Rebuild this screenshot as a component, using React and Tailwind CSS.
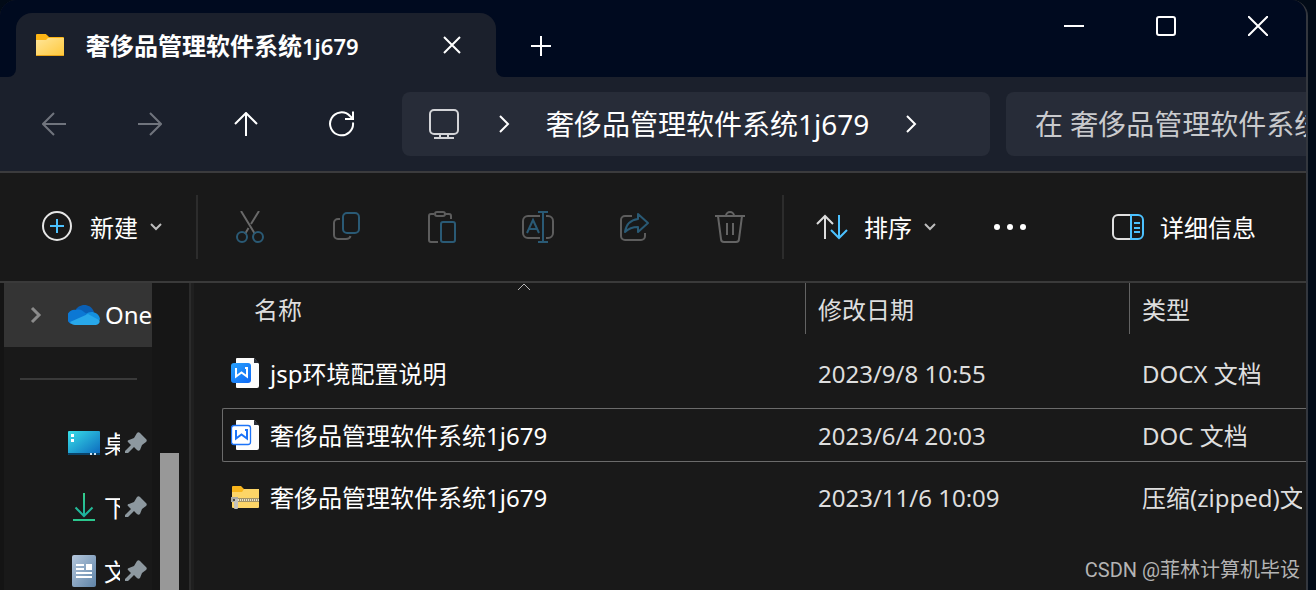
const files = [
  { name: 'jsp环境配置说明', date: '2023/9/8 10:55', type: 'DOCX 文档', icon: DocxIcon },
  { name: '奢侈品管理软件系统1j679', date: '2023/6/4 20:03', type: 'DOC 文档', icon: DocIcon, focused: true },
  { name: '奢侈品管理软件系统1j679', date: '2023/11/6 10:09', type: '压缩(zipped)文件夹', icon: ZipIcon },
];

const pinned = [
  { name: '桌面', icon: DesktopIcon },
  { name: '下载', icon: DownloadIcon },
  { name: '文档', icon: DocumentsIcon },
];

const actions = [
  { label: '剪切', icon: CutIcon },
  { label: '复制', icon: CopyIcon },
  { label: '粘贴', icon: PasteIcon },
  { label: '重命名', icon: RenameIcon },
  { label: '共享', icon: ShareIcon },
  { label: '删除', icon: DeleteIcon },
];

function Svg({ w = 32, h = 32, className = '', children }) {
  return (
    <svg width={w} height={h} viewBox={`0 0 ${w} ${h}`} fill="none" strokeWidth="2" className={`shrink-0 ${className}`} aria-hidden="true">
      {children}
    </svg>
  );
}

function FolderIcon() {
  return (
    <Svg w={28} h={24}>
      <defs>
        <linearGradient id="folder" x1="0" y1="0" x2="1" y2="1">
          <stop stopColor="#ffe69a" />
          <stop offset="1" stopColor="#ffc83a" />
        </linearGradient>
      </defs>
      <path d="M0 2a1 1 0 0 1 1-1h8c1 0 1.500.5 2 1l2 2h14a1 1 0 0 1 1 1v8H0z" fill="#fdb515" />
      <path d="M0 7h10l2-2h16v17a1 1 0 0 1-1 1H1a1 1 0 0 1-1-1z" fill="url(#folder)" />
      <path d="M0 22h28a1 1 0 0 1-1 1H1a1 1 0 0 1-1-1z" fill="#e9a418" />
    </Svg>
  );
}

function CutIcon() {
  return (
    <Svg>
      <path d="M7 0l14 23M25 0l-8 13M14.500 17l-3.500 6" stroke="#696969" />
      <g stroke="#2a5a75">
        <circle cx="8" cy="26" r="5" />
        <circle cx="24" cy="26" r="5" />
      </g>
    </Svg>
  );
}

function CopyIcon() {
  return (
    <Svg>
      <path d="M10 8H8a4 4 0 0 0-4 4v12a4 4 0 0 0 4 4h8c2.500 0 4-1 4.500-3" stroke="#5d5d5d" />
      <rect x="13" y="2" width="16" height="20" rx="4" stroke="#2a5a75" />
    </Svg>
  );
}

function PasteIcon() {
  return (
    <Svg>
      <path d="M8 3H5a2 2 0 0 0-2 2v24a2 2 0 0 0 2 2h7M19 3h4a2 2 0 0 1 2 2v3" stroke="#5d5d5d" />
      <rect x="9" y="1" width="10" height="4" rx="2" stroke="#5d5d5d" />
      <rect x="15" y="11" width="14" height="20" rx="2" stroke="#2a5a75" />
    </Svg>
  );
}

function RenameIcon() {
  return (
    <Svg>
      <path d="M18 5H6a5 5 0 0 0-5 5v12a5 5 0 0 0 5 5h12M24 5h2a5 5 0 0 1 5 5v12a5 5 0 0 1-5 5h-2" stroke="#5d5d5d" />
      <path d="M5 22l6-13 6 13M7 18h8M21 1v30M16 1h10M16 31h10" stroke="#2a5a75" />
    </Svg>
  );
}

function ShareIcon() {
  return (
    <Svg>
      <path d="M14 5H7a4 4 0 0 0-4 4v16a4 4 0 0 0 4 4h16a4 4 0 0 0 4-4v-3" stroke="#5d5d5d" />
      <path d="M20 3l10 9-10 9v-5c-6 0-9 1-13 5 1-7 5-12 13-13z" stroke="#2a5a75" strokeLinejoin="round" />
    </Svg>
  );
}

function DeleteIcon() {
  return (
    <Svg>
      <g stroke="#646464">
        <path d="M1 5h30M4 5l3 23a3 3 0 0 0 3 3h12a3 3 0 0 0 3-3l3-23M13 12v12M19 12v12" />
        <path d="M12 5a4 4 0 0 1 8 0" />
      </g>
    </Svg>
  );
}

function Chevron() {
  return (
    <Svg w={12} h={8}>
      <path d="M1 1l5 5 5-5" stroke="#bdbdbd" />
    </Svg>
  );
}

function ChevronRight({ className = 'stroke-white' }) {
  return (
    <Svg w={12} h={18} className={className}>
      <path d="M2 1l8 8-8 8" />
    </Svg>
  );
}

function OneDriveIcon() {
  return (
    <Svg w={32} h={22}>
      <path d="M7 7C10 0 22-2 26 8l-8 7z" fill="#0a5fb4" />
      <path d="M8 6c4-1 6 0 8 2l6 4L3 20A7.500 7.500 0 0 1 8 6z" fill="#0c78d4" />
      <path d="M18 10c4-4 13-2 14 5l-2 4-12-7z" fill="#1490df" />
      <path d="M2 18l18-8 11 6c2 2-1 5-4 5H7c-2 0-4-1-5-3z" fill="#28a8ea" />
    </Svg>
  );
}

function DesktopIcon() {
  return (
    <Svg w={32} h={24}>
      <defs>
        <linearGradient id="desktop" x1="0" y1="0" x2="1" y2="1">
          <stop stopColor="#38dfe8" />
          <stop offset="1" stopColor="#0b66bd" />
        </linearGradient>
      </defs>
      <rect width="32" height="24" rx="1" fill="url(#desktop)" />
      <path d="M0 22h32v1a1 1 0 0 1-1 1H1a1 1 0 0 1-1-1z" fill="#0a4268" />
      <path d="M3 3h3v3H3zM3 8h3v3H3z" fill="#fff" />
      <path d="M22 22h2v2h-2zM26 22h2v2h-2z" fill="#cfe3f3" />
    </Svg>
  );
}

function DownloadIcon() {
  return (
    <Svg w={32} h={30}>
      <defs>
        <linearGradient id="download" x1="0" y1="0" x2="0" y2="30" gradientUnits="userSpaceOnUse">
          <stop stopColor="#36cf8a" />
          <stop offset="1" stopColor="#15aaa5" />
        </linearGradient>
      </defs>
      <path d="M16 1v23M7.500 15.500L16 24l8.500-8.500" stroke="url(#download)" />
      <path d="M5 28h22" stroke="#2bc78e" />
    </Svg>
  );
}

function DocumentsIcon() {
  return (
    <Svg w={32} h={32}>
      <defs>
        <linearGradient id="documents" x1="0" y1="0" x2="1" y2="1">
          <stop stopColor="#b5c7dc" />
          <stop offset="1" stopColor="#5f84a8" />
        </linearGradient>
      </defs>
      <rect x="4" width="24" height="32" rx="2" fill="url(#documents)" />
      <path d="M8 10h8M8 14h8M8 18h16M8 22h16" stroke="#fff" />
      <path d="M18 9h6v6h-6z" fill="#fff" />
    </Svg>
  );
}

function PinIcon() {
  return (
    <Svg w={22} h={22}>
      <path d="M12 1c1-1 2-1 3 0l6 6c1 1 1 2 0 3l-4 3-2 5c-1 1-2 1-3 0l-3-3-6 6H0v-2l6-6-3-3c-1-1 0-2 1-2l5-2z" fill="#8d989f" />
    </Svg>
  );
}

function Page({ children }) {
  return (
    <Svg w={28} h={32}>
      <path d="M6 1h17l5 6v22a2 2 0 0 1-2 2H6a1 1 0 0 1-1-1V2a1 1 0 0 1 1-1z" fill="#fdfdfd" />
      <path d="M23 1v5h5z" fill="#2b2f38" />
      {children}
    </Svg>
  );
}

function DocxIcon() {
  return (
    <Page>
      <defs>
        <linearGradient id="docx" x1="0" y1="0" x2="1" y2="1">
          <stop stopColor="#2aa2fb" />
          <stop offset="1" stopColor="#0d68f6" />
        </linearGradient>
      </defs>
      <rect y="6" width="20" height="20" rx="3" fill="url(#docx)" />
      <path d="M5 11v8.500l5.500-4 5.500 4V11h-2" stroke="#fff" />
    </Page>
  );
}

function DocIcon() {
  return (
    <Page>
      <rect x="0.500" y="6.500" width="19" height="19" rx="2.500" fill="#fff" stroke="#1c73f7" strokeWidth="1.300" />
      <path d="M5 11v8.500l5.500-4 5.500 4V11h-2" stroke="#1c73f7" />
    </Page>
  );
}

function ZipIcon() {
  return (
    <Svg w={28} h={24}>
      <path d="M1 2a1 1 0 0 1 1-1h8l3 3h14a1 1 0 0 1 1 1v8H1z" fill="#f8b51c" />
      <path d="M1 7h10l2-3h15v18a1 1 0 0 1-1 1H2a1 1 0 0 1-1-1z" fill="#fdd567" />
      <path d="M7 13h21v4H7z" fill="#a39468" />
      <path d="M7 15h21" stroke="#e9e2cc" strokeDasharray="1 1" />
      <path d="M0 12h7v5H0z" fill="#aaa9a2" />
      <path d="M3 14h4v9a1 1 0 0 1-1 1H4a1 1 0 0 1-1-1z" fill="#c4c2bb" />
      <path d="M2 14h2v2H2z" fill="#4c4a42" />
    </Svg>
  );
}

function TitleBar() {
  return (
    <header className="flex h-[77px] bg-[#1b202c]">
      <div className="w-4 rounded-br-lg bg-[#000a1f]" />
      <div className="w-[480px] bg-[#000a1f] pt-[13px]">
        <div className="flex h-16 items-center rounded-t-2xl bg-[#1b202c] px-5">
          <FolderIcon />
          <h1 className="ml-[22px] flex-1 pt-0.5 text-2xl leading-8 font-bold text-white">
            奢侈品管理软件系统<span className="text-[22px] font-semibold">1j679</span>
          </h1>
          <button aria-label="关闭标签页" className="flex h-12 w-12 items-center justify-center">
            <Svg w={18} h={18} className="stroke-white">
              <path d="M1 1l16 16M17 1L1 17" />
            </Svg>
          </button>
        </div>
      </div>
      <div className="flex flex-1 justify-between rounded-bl-lg bg-[#000a1f] pr-0.5">
        <button aria-label="新建标签页" className="mt-4 ml-4 flex h-[60px] w-[58px] items-center justify-center">
          <Svg w={20} h={20} className="stroke-white">
            <path d="M10 0v20M0 10h20" />
          </Svg>
        </button>
        <div className="flex h-[52px]">
          <button aria-label="最小化" className="flex w-[92px] items-center justify-center">
            <Svg w={20} h={20} className="stroke-white">
              <path d="M0 10h20" />
            </Svg>
          </button>
          <button aria-label="最大化" className="flex w-[92px] items-center justify-center">
            <Svg w={20} h={20} className="stroke-white">
              <rect x="1" y="1" width="18" height="18" rx="2" />
            </Svg>
          </button>
          <button aria-label="关闭" className="flex w-[92px] items-center justify-center">
            <Svg w={20} h={20} className="stroke-white">
              <path d="M0 0l20 20M20 0L0 20" />
            </Svg>
          </button>
        </div>
      </div>
    </header>
  );
}

function NavBar() {
  return (
    <div className="flex items-center border-b-2 border-[#3b3b3d] bg-[#1b202c] py-[15px] pl-1.5">
      <button aria-label="后退" disabled className="flex h-16 w-24 items-center justify-center">
        <Svg w={24} h={24} className="stroke-[#70747d]">
          <path d="M24 12H1M12 1L1 12l11 11" />
        </Svg>
      </button>
      <button aria-label="前进" disabled className="flex h-16 w-24 items-center justify-center">
        <Svg w={24} h={24} className="stroke-[#70747d]">
          <path d="M0 12h23M12 1l11 11-11 11" />
        </Svg>
      </button>
      <button aria-label="向上" className="flex h-16 w-24 items-center justify-center">
        <Svg w={24} h={24} className="stroke-white">
          <path d="M12 24V1M1 12L12 1l11 11" />
        </Svg>
      </button>
      <button aria-label="刷新" className="flex h-16 w-24 items-center justify-center">
        <Svg w={26} h={26} className="stroke-white">
          <path d="M24 11.500a11.500 11.500 0 1 1-3-6.500l3 3M24 0.500v7.500h-8" />
        </Svg>
      </button>
      <nav aria-label="地址" className="ml-3 flex h-16 flex-1 items-center rounded-lg bg-[#272c38] pl-[27px]">
        <button aria-label="此电脑">
          <Svg w={30} h={30} className="stroke-[#d3d4d7]">
            <rect x="1" y="1" width="28" height="24" rx="4" />
            <path d="M11 25v4M19 25v4M5 29h20" />
          </Svg>
        </button>
        <span className="ml-[39px]"><ChevronRight /></span>
        <button className="mx-9 text-[28px] leading-10 whitespace-nowrap text-white">奢侈品管理软件系统1j679</button>
        <ChevronRight />
      </nav>
      <input
        type="text"
        aria-label="搜索"
        placeholder="在 奢侈品管理软件系统1j679 中搜索"
        className="ml-4 h-16 w-[300px] rounded-l-lg bg-[#272c38] pl-[29px] text-[28px] text-white outline-none placeholder:text-[#c9cacd]"
      />
    </div>
  );
}

function CommandBar() {
  return (
    <div className="flex h-[110px] items-center border-b-2 border-[#3a3a3a] text-2xl leading-8 text-white">
      <button className="ml-[41px] flex items-center">
        <Svg>
          <circle cx="16" cy="15" r="14" stroke="#e6e6e6" />
          <path d="M16 8v14M9 15h14" stroke="#4cc2ff" />
        </Svg>
        <span className="mr-3 ml-[17px] pt-0.5">新建</span>
        <Chevron />
      </button>
      <div className="ml-[34px] h-16 w-0.5 bg-[#2c2c2c]" />
      <div className="ml-1 flex">
        {actions.map(({ label, icon: Icon }) => (
          <button key={label} aria-label={label} disabled className="flex h-16 w-24 items-center justify-center">
            <Icon />
          </button>
        ))}
      </div>
      <div className="ml-1 h-16 w-0.5 bg-[#2c2c2c]" />
      <button className="ml-8 flex items-center">
        <Svg w={32} h={26}>
          <path d="M9 25V2M1 10l8-8 8 8" stroke="#dcdcdc" />
          <path d="M23 1v23M15 16l8 8 8-8" stroke="#4cc2ff" />
        </Svg>
        <span className="mr-3 ml-4 pt-0.5">排序</span>
        <Chevron />
      </button>
      <button aria-label="更多" className="ml-[42px] flex h-16 w-16 items-center justify-center">
        <Svg w={32} h={8} className="fill-white">
          <circle cx="3" cy="4" r="3" />
          <circle cx="16" cy="4" r="3" />
          <circle cx="29" cy="4" r="3" />
        </Svg>
      </button>
      <button className="mr-[50px] ml-auto flex items-center">
        <Svg w={32} h={26}>
          <path d="M19 1H6a5 5 0 0 0-5 5v14a5 5 0 0 0 5 5h13" stroke="#e0e0e0" />
          <path d="M19 1h7a5 5 0 0 1 5 5v14a5 5 0 0 1-5 5h-7zM22 9h6M22 14h6M22 18h6" stroke="#4cc2ff" />
        </Svg>
        <span className="ml-4 pt-0.5">详细信息</span>
      </button>
    </div>
  );
}

function Sidebar() {
  return (
    <aside className="flex w-[194px] shrink-0 border-l-4 border-[#141414] bg-[#161616] text-2xl leading-8 text-white">
      <div className="w-[148px] bg-[#191919]">
        <a href="#onedrive" className="flex h-16 items-center overflow-hidden bg-[#343434] pl-[26px]">
          <Svg w={12} h={18} className="mr-[26px] stroke-[#8b8b8b] stroke-3">
            <path d="M2 2l7 7-7 7" />
          </Svg>
          <OneDriveIcon />
          <span className="ml-[5px]">OneDrive</span>
        </a>
        <div className="flex h-16 items-center pr-[15px] pl-4">
          <hr className="flex-1 border-t-2 border-[#3a3a3a]" />
        </div>
        {pinned.map(({ name, icon: Icon }) => (
          <a key={name} href={`#${name}`} className="flex h-16 items-center pl-16">
            <Icon />
            <span className="mr-[5px] ml-1 w-4 overflow-hidden pt-0.5 whitespace-nowrap">{name}</span>
            <PinIcon />
          </a>
        ))}
      </div>
      {/* scrollbar */}
      <div className="flex-1 pt-[170px] pl-2">
        <div className="h-full w-[19px] bg-[#989898]" />
      </div>
      <div className="w-[5px] border-l-2 border-[#2b2b2b] bg-[#1f1f1f]" />
    </aside>
  );
}

function FileList() {
  return (
    <main className="min-w-0 flex-1 overflow-hidden pl-7">
      <table className="w-full table-fixed border-separate border-spacing-0 text-left text-2xl leading-8 whitespace-nowrap text-[#dedede]">
        <colgroup>
          <col className="w-[584px]" />
          <col className="w-[324px]" />
          <col />
        </colgroup>
        <thead>
          <tr className="h-[59px] align-top">
            <th className="p-0 font-normal">
              <div className="relative ml-5 flex h-[51px] items-center border-r border-[#636363] pt-0.5 pl-3">
                名称
                <Svg w={14} h={8} className="absolute top-0 left-1/2 -translate-x-1/2 stroke-[#b5b5b5] stroke-1">
                  <path d="M1 7l6-6 6 6" />
                </Svg>
              </div>
            </th>
            <th className="p-0 font-normal">
              <div className="flex h-[51px] items-center border-r border-[#636363] pt-0.5 pl-3">修改日期</div>
            </th>
            <th className="p-0 font-normal">
              <div className="flex h-[51px] items-center pt-0.5 pl-3">类型</div>
            </th>
          </tr>
        </thead>
        <tbody>
          {files.map(({ name, date, type, icon: Icon, focused }) => {
            const edge = focused ? 'border-[#6b6b6b]' : 'border-transparent';
            return (
              <tr key={date} className="h-[62px]">
                <td className="p-0">
                  <div className={`flex h-[54px] items-center gap-[11px] rounded-l-xs border-y border-l pl-2 text-white ${edge}`}>
                    <Icon />
                    <span className="pt-0.5">{name}</span>
                  </div>
                </td>
                <td className="p-0">
                  <div className={`flex h-[54px] items-center border-y pt-0.5 pl-3 ${edge}`}>{date}</div>
                </td>
                <td className="p-0">
                  <div className={`flex h-[54px] items-center border-y pt-0.5 pr-1 pl-3 ${edge}`}>
                    <span className="overflow-hidden">{type}</span>
                  </div>
                </td>
              </tr>
            );
          })}
        </tbody>
      </table>
    </main>
  );
}

export default function App() {
  return (
    <div className="h-screen overflow-hidden bg-[#020b17] pr-2 font-['Noto_Sans','Noto_Sans_CJK_SC',sans-serif]">
      <div className="relative flex h-full flex-col overflow-hidden rounded-t-2xl border-r-2 border-[#33373e] bg-[#191919]">
        <TitleBar />
        <NavBar />
        <CommandBar />
        <div className="flex min-h-0 flex-1 overflow-hidden">
          <Sidebar />
          <FileList />
        </div>
        <p className="absolute right-1.5 bottom-1 font-['Roboto','Noto_Sans_CJK_SC',sans-serif] text-xl leading-8 text-[#b4b4b4]">
          CSDN @菲林计算机毕设
        </p>
      </div>
    </div>
  );
}
